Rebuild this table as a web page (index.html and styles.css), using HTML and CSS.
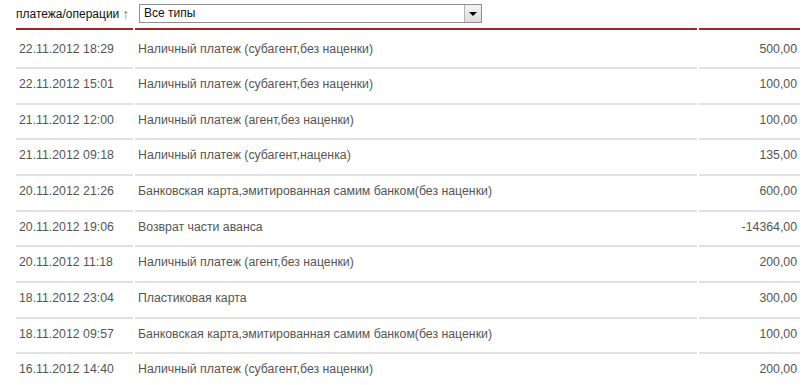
FILE: index.html
```html
<!DOCTYPE html>
<html>
<head>
<meta charset="utf-8">
<link rel="stylesheet" href="styles.css">
</head>
<body>
<div class="table">
  <div class="row head">
    <div class="cell c1 htitle">платежа/операции <span class="arrow">↑</span></div>
    <div class="cell c2">
      <div class="select"><span class="sel-text">Все типы</span><span class="sel-btn"><span class="tri"></span></span></div>
    </div>
    <div class="cell c3"></div>
  </div>
  <div class="row first">
    <div class="cell c1">22.11.2012 18:29</div>
    <div class="cell c2">Наличный платеж (субагент,без наценки)</div>
    <div class="cell c3">500,00</div>
  </div>
  <div class="row">
    <div class="cell c1">22.11.2012 15:01</div>
    <div class="cell c2">Наличный платеж (субагент,без наценки)</div>
    <div class="cell c3">100,00</div>
  </div>
  <div class="row">
    <div class="cell c1">21.11.2012 12:00</div>
    <div class="cell c2">Наличный платеж (агент,без наценки)</div>
    <div class="cell c3">100,00</div>
  </div>
  <div class="row">
    <div class="cell c1">21.11.2012 09:18</div>
    <div class="cell c2">Наличный платеж (субагент,наценка)</div>
    <div class="cell c3">135,00</div>
  </div>
  <div class="row">
    <div class="cell c1">20.11.2012 21:26</div>
    <div class="cell c2">Банковская карта,эмитированная самим банком(без наценки)</div>
    <div class="cell c3">600,00</div>
  </div>
  <div class="row">
    <div class="cell c1">20.11.2012 19:06</div>
    <div class="cell c2">Возврат части аванса</div>
    <div class="cell c3">-14364,00</div>
  </div>
  <div class="row">
    <div class="cell c1">20.11.2012 11:18</div>
    <div class="cell c2">Наличный платеж (агент,без наценки)</div>
    <div class="cell c3">200,00</div>
  </div>
  <div class="row">
    <div class="cell c1">18.11.2012 23:04</div>
    <div class="cell c2">Пластиковая карта</div>
    <div class="cell c3">300,00</div>
  </div>
  <div class="row">
    <div class="cell c1">18.11.2012 09:57</div>
    <div class="cell c2">Банковская карта,эмитированная самим банком(без наценки)</div>
    <div class="cell c3">100,00</div>
  </div>
  <div class="row">
    <div class="cell c1">16.11.2012 14:40</div>
    <div class="cell c2">Наличный платеж (субагент,без наценки)</div>
    <div class="cell c3">200,00</div>
  </div>
</div>
</body>
</html>
```

FILE: styles.css
```css
html, body {
  margin: 0;
  padding: 0;
  background: #ffffff;
  overflow: hidden;
}
body {
  font-family: "Liberation Sans", Arial, sans-serif;
  font-size: 12.3px;
  color: #555555;
}
.table {
  margin-left: 16px;
  width: 784px;
}
.row {
  display: grid;
  grid-template-columns: 117px 562px 101px;
  column-gap: 2px;
  height: 35.67px;
}
.cell {
  box-sizing: border-box;
  border-bottom: 2px solid #e2e2e2;
  padding: 8px 3px 0 3px;
  line-height: 14px;
  white-space: nowrap;
}
.c3 {
  text-align: right;
}
.row.first {
  height: 39px;
}
.row.first .cell {
  padding-top: 12px;
}
.row.head {
  height: 30px;
}
.row.head .cell {
  border-bottom: 2px solid #a2242a;
  padding: 0;
  display: flex;
  align-items: center;
}
.htitle {
  color: #111111;
  font-size: 12px;
  padding-bottom: 2px;
}
.arrow {
  color: #777777;
  margin-left: 3px;
  font-size: 14px;
}
.select {
  box-sizing: border-box;
  margin-left: 4px;
  width: 343px;
  height: 19px;
  border: 1px solid #8f8f8f;
  background: #ffffff;
  display: flex;
  align-items: center;
  justify-content: space-between;
  margin-top: -2px;
}
.sel-text {
  color: #111111;
  padding-left: 4px;
  font-size: 12px;
}
.sel-btn {
  box-sizing: border-box;
  width: 17px;
  height: 17px;
  border-left: 1px solid #b5b5b5;
  background: linear-gradient(#f4f4f4, #dcdcdc);
  display: flex;
  align-items: center;
  justify-content: center;
}
.tri {
  width: 0;
  height: 0;
  border-left: 4px solid transparent;
  border-right: 4px solid transparent;
  border-top: 4px solid #000000;
  margin-top: 2px;
}
```
